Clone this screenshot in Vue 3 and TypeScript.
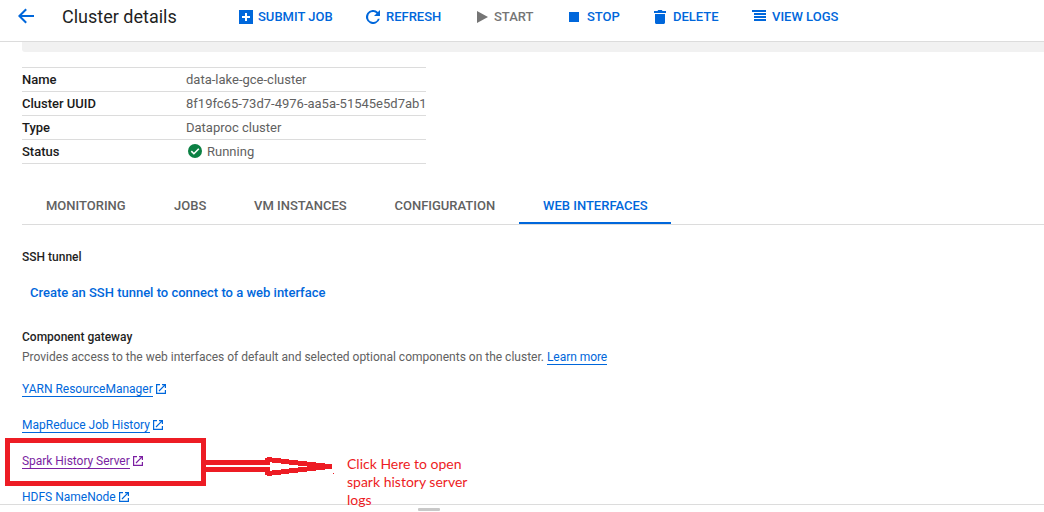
<script setup lang="ts">
interface Action {
  id: string
  label: string
}

interface Gateway {
  label: string
  visited?: boolean
}

const actions: Action[] = [
  { id: 'submit', label: 'SUBMIT JOB' },
  { id: 'refresh', label: 'REFRESH' },
  { id: 'start', label: 'START' },
  { id: 'stop', label: 'STOP' },
  { id: 'delete', label: 'DELETE' },
  { id: 'logs', label: 'VIEW LOGS' },
]

const tabs: string[] = ['MONITORING', 'JOBS', 'VM INSTANCES', 'CONFIGURATION', 'WEB INTERFACES']
const activeTab = 'WEB INTERFACES'

const gateways: Gateway[] = [
  { label: 'YARN ResourceManager' },
  { label: 'MapReduce Job History' },
  { label: 'Spark History Server', visited: true },
  { label: 'HDFS NameNode' },
]
</script>

<template>
  <div class="page">
    <header class="bar">
      <svg class="back" width="16" height="16" viewBox="0 0 16 16">
        <path d="M16 8H1.6M8.2 1.2L1.4 8l6.8 6.8" />
      </svg>
      <h1 class="title">Cluster details</h1>
      <nav class="actions">
        <button v-for="a in actions" :key="a.id" class="action" :class="a.id">
          <svg class="glyph" width="14" height="14" viewBox="0 0 14 14">
            <path v-if="a.id === 'submit'" fill-rule="evenodd" d="M0 0h14v14H0zM6 3v3H3v2h3v3h2V8h3V6H8V3z" />
            <path v-else-if="a.id === 'refresh'" d="M11.95 2.05A7 7 0 1 0 13.78 8.75h-1.95A5 5 0 1 1 7 2c1.380 0 2.600.55 3.500 1.500L8 6h6V0z" />
            <path v-else-if="a.id === 'start'" d="M0 1l11 6-11 6z" />
            <path v-else-if="a.id === 'stop'" d="M0 2h10v10H0z" />
            <path v-else-if="a.id === 'delete'" d="M0 1h3.5L4.200 0h3.600l.7 1H12v2H0zM1 4h10v8.500c0 .8-.7 1.500-1.500 1.500h-7C1.700 14 1 13.300 1 12.500z" />
            <path v-else d="M0 0h14v2H0zM2 3h12v2H2zM2 6h12v2H2zM2 9h12v2H2z" />
          </svg>
          <span>{{ a.label }}</span>
        </button>
      </nav>
    </header>

    <main class="content">
      <div class="band"></div>

      <dl class="facts">
        <div class="fact"><dt>Name</dt><dd>data-lake-gce-cluster</dd></div>
        <div class="fact"><dt>Cluster UUID</dt><dd>8f19fc65-73d7-4976-aa5a-51545e5d7ab1</dd></div>
        <div class="fact"><dt>Type</dt><dd>Dataproc cluster</dd></div>
        <div class="fact">
          <dt>Status</dt>
          <dd class="status">
            <svg width="14" height="14" viewBox="0 0 14 14">
              <circle cx="7" cy="7" r="7" fill="#0b8043" />
              <path d="M3.300 7.100l2.600 2.600 4.900-4.900" fill="none" stroke="#fff" stroke-width="1.600" />
            </svg>
            <span>Running</span>
          </dd>
        </div>
      </dl>

      <nav class="tabs">
        <a v-for="t in tabs" :key="t" class="tab" :class="{ active: t === activeTab }">{{ t }}</a>
      </nav>

      <section class="tunnel">
        <h2>SSH tunnel</h2>
        <a class="create">Create an SSH tunnel to connect to a web interface</a>
      </section>

      <section class="gateway">
        <h2>Component gateway</h2>
        <p><span>Provides access to the web interfaces of default and selected optional components on the cluster.</span><a class="link">Learn more</a></p>
        <ul class="links">
          <li v-for="g in gateways" :key="g.label" :class="{ visited: g.visited }">
            <a class="link">{{ g.label }}</a>
            <svg width="10" height="10" viewBox="0 0 10 10">
              <path d="M4 .600H.600v8.800h8.800V6M6 .600h3.400V4M9.300 .7L3 7" />
            </svg>
          </li>
        </ul>
      </section>
    </main>

    <footer class="drawer"><span class="grip"></span></footer>

    <svg class="marker" width="340" height="80" viewBox="0 0 340 80">
      <rect x="7.500" y="10.500" width="196" height="43" />
      <path d="M204 32.500H270M204 39.500H270" />
      <path d="M265 30.500h2M267 29.500h5M272 30.500h9M281 31.500h8M289 32.500h9M298 33.500h9M307 34.500h9M316 35.500h9M325 36.500h7" />
      <path d="M265 42.500h2M267 43.500h5M272 42.500h9M281 41.500h8M289 40.500h9M298 39.500h9M307 38.500h9M316 37.500h9" />
      <path class="dot" d="M333 43h1v1h-1z" />
    </svg>
    <p class="note">Click Here to open<br />spark history server<br />logs</p>
  </div>
</template>

<style>
html,
body {
  margin: 0;
  background: #fff;
  overflow: hidden;
}
</style>

<style scoped>
.page {
  position: relative;
  display: flex;
  flex-direction: column;
  width: 1044px;
  height: 512px;
  overflow: hidden;
  background: #fff;
  font-family: Roboto, 'Liberation Sans', sans-serif;
  font-size: 13px;
  color: #616161;
}

h1,
h2,
p,
dl,
dd,
ul {
  margin: 0;
  padding: 0;
}

.bar {
  display: flex;
  flex: none;
  box-sizing: border-box;
  height: 42px;
  padding-left: 18px;
  border-bottom: 1px solid #dcdcdc;
}

.back {
  margin-top: 8px;
  fill: none;
  stroke: #0067db;
  stroke-width: 2;
}

.title {
  width: 177px;
  margin-left: 28px;
  font-size: 18px;
  font-weight: 400;
  line-height: 33px;
  color: #1f1f1f;
  white-space: nowrap;
}

.actions {
  display: grid;
  grid-template-columns: 127px 111px 92px 85px 98px 100px;
  height: 33px;
}

.action {
  display: flex;
  align-items: center;
  gap: 5px;
  padding: 0;
  border: 0;
  background: none;
  font: 500 13px/33px Roboto, sans-serif;
  color: #0067db;
  white-space: nowrap;
}

.glyph {
  flex: none;
  fill: currentColor;
}

.refresh {
  gap: 6px;
}

.start {
  gap: 3px;
  color: #757575;
}

.stop {
  gap: 4px;
}

.logs {
  gap: 6px;
}

.content {
  display: flex;
  flex: none;
  flex-direction: column;
  height: 462px;
  padding-left: 22px;
  overflow: hidden;
}

.band {
  flex: none;
  height: 10px;
  border-bottom-left-radius: 3px;
  background: #f1f1f1;
}

.facts {
  width: 404px;
  margin-top: 15px;
  border-top: 1px solid #dcdcdc;
}

.fact {
  display: flex;
  box-sizing: border-box;
  height: 24px;
  border-bottom: 1px solid #dcdcdc;
  line-height: 23px;
}

dt {
  flex: none;
  width: 164px;
  font-weight: 500;
  color: #1a1a1a;
}

dd {
  white-space: nowrap;
}

.status {
  display: flex;
  align-items: center;
  gap: 5px;
  padding-left: 2px;
}

.status svg {
  margin-top: -1px;
}

.tabs {
  display: grid;
  flex: none;
  grid-template-columns: 128px 80px 140.500px 148.500px 152px;
  box-sizing: border-box;
  height: 38px;
  margin-top: 23px;
  border-bottom: 1px solid #dcdcdc;
}

.tab {
  box-sizing: border-box;
  height: 37px;
  padding-left: 24px;
  font-weight: 500;
  line-height: 37px;
  white-space: nowrap;
}

.tab.active {
  border-bottom: 2px solid #0067db;
  color: #0067db;
}

h2 {
  font-size: 12px;
  font-weight: 500;
  line-height: 20px;
  color: #1f1f1f;
}

.tunnel {
  padding-top: 22px;
}

.create {
  display: block;
  margin: 16px 0 0 8px;
  font-weight: 500;
  line-height: 20px;
  color: #0067db;
}

.gateway {
  padding-top: 24px;
  font-size: 12px;
}

.gateway p {
  display: flex;
  gap: 3px;
  height: 20px;
  line-height: 20px;
}

.gateway p .link {
  letter-spacing: -0.050px;
}

.link {
  height: 15px;
  margin-top: 2px;
  border-bottom: 1px solid #0067db;
  line-height: 16px;
  color: #0067db;
  white-space: nowrap;
}

.links {
  display: flex;
  flex-direction: column;
  gap: 16px;
  padding-top: 12px;
  list-style: none;
}

.links li {
  display: flex;
  gap: 3px;
  height: 20px;
}

.links svg {
  margin-top: 5px;
  fill: none;
  stroke: #0067db;
  stroke-width: 1.200;
}

.visited .link {
  border-color: #7b1fa2;
  color: #7b1fa2;
  letter-spacing: -0.040px;
}

.links .visited svg {
  stroke: #7b1fa2;
}

.drawer {
  display: flex;
  flex: none;
  height: 7px;
  padding-left: 418px;
  border-top: 1px solid #dcdcdc;
}

.grip {
  width: 22px;
  height: 3px;
  margin-top: 3px;
  border-radius: 1px;
  background: #c8c8c8;
}

.marker {
  position: absolute;
  top: 430px;
  left: 0;
  fill: none;
  stroke: #ed1c24;
  stroke-width: 5;
}

.marker .dot {
  fill: #ed1c24;
  stroke: none;
}

.note {
  position: absolute;
  top: 455px;
  left: 347px;
  font: 400 14px/18px Lato, 'Open Sans', sans-serif;
  color: #ed1c24;
  white-space: nowrap;
}
</style>
